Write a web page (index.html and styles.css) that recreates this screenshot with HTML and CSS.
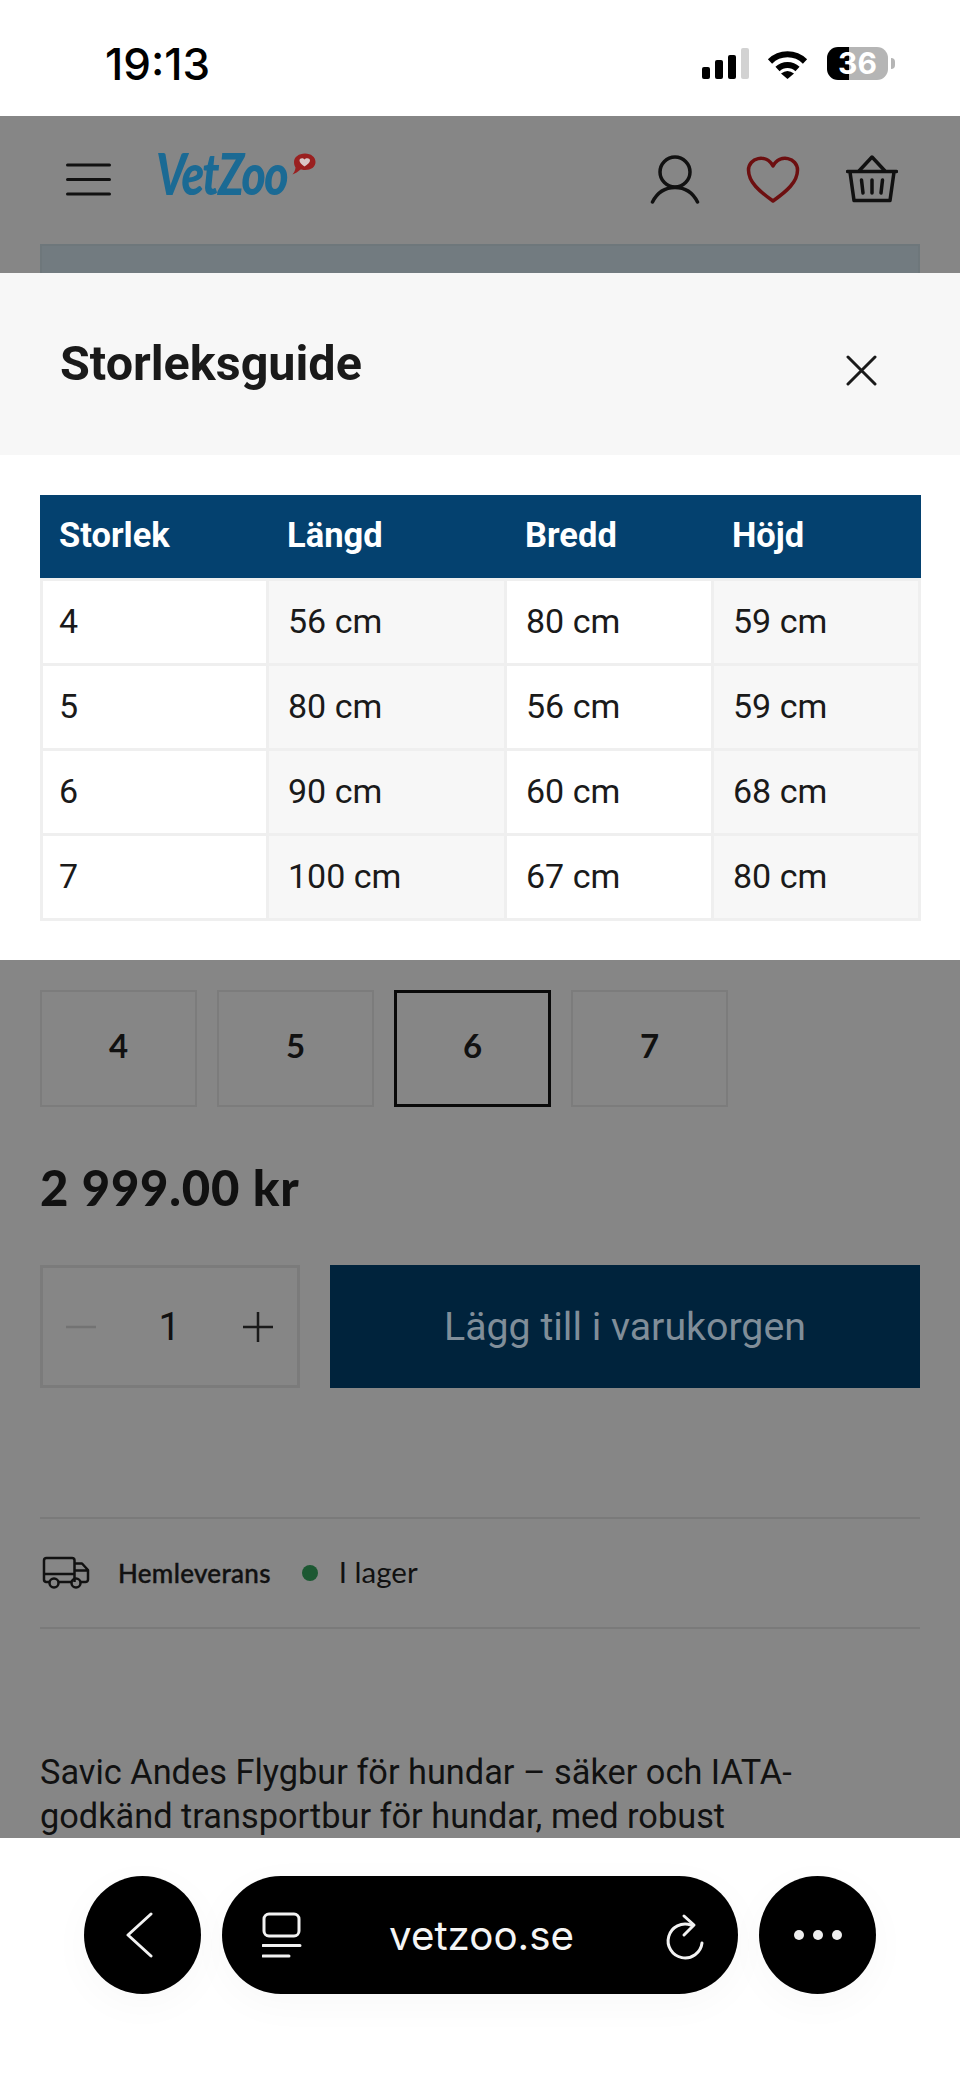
FILE: index.html

```html
<!DOCTYPE html>
<html>
<head>
  <meta charset="UTF-8">
  <title>Storleksguide - VetZoo</title>
  <link rel="stylesheet" href="styles.css">
</head>
<body>
<div class="phone">

  <div class="statusbar">
    <div class="time">19:13</div>
    <div class="status-icons">
      <div class="signal">
        <span class="bar bar1"></span>
        <span class="bar bar2"></span>
        <span class="bar bar3"></span>
        <span class="bar bar4"></span>
      </div>
      <svg class="wifi" width="41" height="31" viewBox="0 0 41 31">
        <path d="M3 13.500A25 25 0 0 1 38 13.500" fill="none" stroke="#000" stroke-width="6"/>
        <path d="M10.500 21A14.500 14.500 0 0 1 30.500 21" fill="none" stroke="#000" stroke-width="6"/>
        <path d="M14 25.500Q20.500 20.500 27 25.500L20.500 31Z" fill="#000"/>
      </svg>
      <div class="battery">36</div>
      <div class="battery-nub"></div>
    </div>
  </div>

  <div class="site-header">
    <svg class="menu-icon" width="45" height="34" viewBox="0 0 45 34">
      <path d="M1.500 3H43.500M1.500 17.500H43.500M1.500 32H43.500" stroke="#111" stroke-width="3" stroke-linecap="round"/>
    </svg>
    <div class="logo">
      <span class="logo-text">VetZoo</span>
      <svg class="logo-bubble" width="24" height="23" viewBox="0 0 24 23">
        <path d="M13 0.500C19 0.500 23.500 4 23.500 9C23.500 14 19 17 13 17C11 17 10 16.800 8.500 16.500C6 18.500 3.500 20.500 0.500 21.500C2 19.500 3.500 17 3.500 14.500C2.500 13 2 11 2 9C2 4 7 0.500 13 0.500Z" fill="#9a2020"/>
        <path d="M12.500 13.500C9.500 11.500 7.500 9.500 7.500 7.500C7.500 5 11 4.500 12.500 6.500C14 4.500 18 5 18 7.500C18 9.500 15.500 11.500 12.500 13.500Z" fill="#d9c8c8"/>
      </svg>
    </div>
    <div class="header-icons">
      <svg width="50" height="50" viewBox="0 0 50 50">
        <circle cx="25" cy="18" r="15" fill="none" stroke="#111" stroke-width="3.500"/>
        <path d="M2.500 48C7 39 15 33.500 25 33.500C35 33.500 43 39 47.500 48" fill="none" stroke="#111" stroke-width="3.500" stroke-linecap="round"/>
      </svg>
      <svg width="54" height="48" viewBox="0 0 54 48">
        <path d="M27 46C13 36 2.500 27 2.500 15C2.500 3 20 -2 27 11C34 -2 51.500 3 51.500 15C51.500 27 41 36 27 46Z" fill="none" stroke="#6d0f10" stroke-width="3.500" stroke-linejoin="round"/>
      </svg>
      <svg width="52" height="48" viewBox="0 0 52 48">
        <path d="M1.500 16.500H50.500M4 17L8 45.500H44L48 17" fill="none" stroke="#111" stroke-width="3.500" stroke-linecap="round" stroke-linejoin="round"/>
        <path d="M13 16L26 2L39 16" fill="none" stroke="#111" stroke-width="3.500" stroke-linejoin="round"/>
        <path d="M15.500 25L17 38M26 25V38M36.500 25L35 38" fill="none" stroke="#111" stroke-width="3.500" stroke-linecap="round"/>
      </svg>
    </div>
  </div>
  <div class="notice-box"></div>

  <div class="modal">
    <div class="modal-head">
      <h2>Storleksguide</h2>
      <svg class="close-icon" width="31" height="31" viewBox="0 0 31 31">
        <path d="M2 2L29 29M29 2L2 29" stroke="#1a1a1a" stroke-width="3" stroke-linecap="round"/>
      </svg>
    </div>
    <div class="modal-body">
      <table class="size-table">
        <thead>
          <tr><th class="col-size">Storlek</th><th class="col-len">Längd</th><th class="col-wid">Bredd</th><th>Höjd</th></tr>
        </thead>
        <tbody>
          <tr><td>4</td><td>56 cm</td><td>80 cm</td><td>59 cm</td></tr>
          <tr><td>5</td><td>80 cm</td><td>56 cm</td><td>59 cm</td></tr>
          <tr><td>6</td><td>90 cm</td><td>60 cm</td><td>68 cm</td></tr>
          <tr><td>7</td><td>100 cm</td><td>67 cm</td><td>80 cm</td></tr>
        </tbody>
      </table>
    </div>
  </div>

  <div class="product">
    <div class="sizes">
      <div class="size">4</div>
      <div class="size">5</div>
      <div class="size selected">6</div>
      <div class="size">7</div>
    </div>
    <div class="price">2 999.00 kr</div>
    <div class="buy-row">
      <div class="qty">
        <svg width="30" height="4" viewBox="0 0 30 4"><path d="M0 2H30" stroke="#737373" stroke-width="2.500"/></svg>
        <span class="qty-num">1</span>
        <svg width="30" height="30" viewBox="0 0 30 30"><path d="M0 15H30M15 0V30" stroke="#1a1a1a" stroke-width="2.500"/></svg>
      </div>
      <div class="add-btn">Lägg till i varukorgen</div>
    </div>
    <div class="delivery">
      <svg class="truck" width="48" height="34" viewBox="0 0 48 34">
        <path d="M7 26H4A2.500 2.500 0 0 1 2 23.500V4.500A2.500 2.500 0 0 1 4.500 2H30A2.500 2.500 0 0 1 32.500 4.500V26M17 26H29M2 18H32.500M33 7.500H40L46 14V23.500A2.500 2.500 0 0 1 43.500 26H39M33 14.500H46" fill="none" stroke="#111" stroke-width="2.500" stroke-linejoin="round"/>
        <circle cx="12" cy="27" r="4.500" fill="none" stroke="#111" stroke-width="2.500"/>
        <circle cx="34" cy="27" r="4.500" fill="none" stroke="#111" stroke-width="2.500"/>
      </svg>
      <span class="delivery-name">Hemleverans</span>
      <span class="stock-dot"></span>
      <span class="stock-text">I lager</span>
    </div>
    <p class="description">Savic Andes Flygbur för hundar – säker och IATA-godkänd transportbur för hundar, med robust</p>
  </div>

  <div class="browser-bar">
    <div class="round-btn back-btn">
      <svg width="28" height="46" viewBox="0 0 28 46">
        <path d="M25 2L2 23L25 44" fill="none" stroke="#f2f2f2" stroke-width="3" stroke-linecap="round" stroke-linejoin="round"/>
      </svg>
    </div>
    <div class="url-pill">
      <svg class="tabs-icon" width="40" height="46" viewBox="0 0 40 46">
        <rect x="2" y="2" width="35" height="22" rx="5" fill="none" stroke="#f2f2f2" stroke-width="3"/>
        <path d="M1 33.500H38M1 44H27" stroke="#f2f2f2" stroke-width="3" stroke-linecap="round"/>
      </svg>
      <span class="url">vetzoo.se</span>
      <svg class="reload-icon" width="50" height="54" viewBox="0 0 50 54">
        <path d="M30 17A17 17 0 1 0 41 35" fill="none" stroke="#f2f2f2" stroke-width="3" stroke-linecap="round"/>
        <path d="M23 8L33 17L23 27" fill="none" stroke="#f2f2f2" stroke-width="3" stroke-linecap="round" stroke-linejoin="round"/>
      </svg>
    </div>
    <div class="round-btn dots">
      <span></span><span></span><span></span>
    </div>
  </div>

</div>
</body>
</html>
```

FILE: styles.css

```css
* {
  box-sizing: border-box;
}
body {
  margin: 0;
  background: #868686;
  font-family: Roboto, "Liberation Sans", sans-serif;
  color: #111;
}
.phone {
  width: 960px;
  height: 2078px;
  display: flex;
  flex-direction: column;
  overflow: hidden;
}

/* status bar */
.statusbar {
  height: 116px;
  flex: none;
  background: #fff;
  display: flex;
  align-items: center;
  justify-content: space-between;
  padding: 11px 65px 0 105px;
}
.time {
  font-family: Inter, sans-serif;
  font-size: 44px;
  font-weight: 500;
  color: #000;
}
.status-icons {
  display: flex;
  align-items: center;
}
.signal {
  display: flex;
  align-items: flex-end;
  gap: 5px;
  height: 31px;
  margin-right: 18px;
}
.bar {
  width: 8px;
  background: #000;
  border-radius: 2px;
}
.bar1 { height: 12px; }
.bar2 { height: 19px; }
.bar3 { height: 24px; }
.bar4 { height: 31px; background: #d2d2d2; }
.wifi {
  margin-right: 19px;
}
.battery {
  width: 61px;
  height: 33px;
  border-radius: 11px;
  background: linear-gradient(90deg, #000 36%, #b5b5b5 36%);
  color: #fff;
  font-family: Inter, sans-serif;
  font-size: 30px;
  font-weight: 700;
  line-height: 33px;
  text-align: center;
}
.battery-nub {
  width: 4px;
  height: 11px;
  margin-left: 3px;
  background: #b5b5b5;
  border-radius: 0 4px 4px 0;
}

/* site header behind the overlay */
.site-header {
  height: 128px;
  flex: none;
  display: flex;
  align-items: center;
  padding: 0 62px 2px 66px;
}
.menu-icon {
  margin-right: 45px;
}
.logo {
  display: flex;
  align-items: flex-start;
  width: 160px;
  height: 54px;
}
.logo-text {
  font-family: Lato, sans-serif;
  font-style: italic;
  font-weight: 900;
  font-size: 58px;
  line-height: 54px;
  color: #1b6a94;
  letter-spacing: -2px;
  width: 136px;
  margin-top: -6px;
  display: inline-block;
  transform: scaleX(.8);
  transform-origin: left center;
}
.logo-bubble {
  margin-top: 1px;
}
.header-icons {
  margin-left: auto;
  display: flex;
  align-items: center;
  gap: 46px;
}
.notice-box {
  height: 29px;
  flex: none;
  margin: 0 40px;
  background: #727b80;
  border: 2px solid #6e777b;
  border-bottom: none;
}

/* modal */
.modal {
  flex: none;
  background: #fff;
}
.modal-head {
  height: 182px;
  background: #f7f7f7;
  display: flex;
  align-items: center;
  justify-content: space-between;
  padding: 0 83px 0 60px;
}
.modal-head h2 {
  margin: 0 0 2px;
  font-size: 48.500px;
  font-weight: 700;
  color: #1a1a1a;
}
.close-icon {
  margin-top: 13px;
}
.modal-body {
  height: 505px;
  padding: 40px 39px 0 40px;
}
.size-table {
  width: 881px;
  table-layout: fixed;
  border-collapse: separate;
  border-spacing: 0;
  font-size: 34px;
  color: #1a1a1a;
}
.size-table th {
  height: 83px;
  padding: 0 0 3px 18px;
  background: #04416f;
  color: #fff;
  font-size: 34.500px;
  font-weight: 700;
  text-align: left;
}
.size-table th:first-child {
  padding-left: 19px;
}
.col-size { width: 229px; }
.col-len { width: 238px; }
.col-wid { width: 207px; }
.size-table td {
  height: 85px;
  padding: 0 0 3px 19px;
  border-right: 3px solid #efefef;
  border-bottom: 3px solid #efefef;
}
.size-table td:first-child {
  padding-left: 16px;
  border-left: 3px solid #efefef;
}
.size-table tbody tr:first-child td {
  height: 88px;
  border-top: 3px solid #efefef;
}
.size-table td:nth-child(even) {
  background: #f7f7f7;
}

/* product */
.product {
  flex: 1;
  min-height: 0;
  overflow: hidden;
  padding: 30px 40px 0;
}
.sizes {
  display: flex;
  gap: 20px;
}
.size {
  width: 157px;
  height: 117px;
  border: 2px solid #7c7c7c;
  display: flex;
  align-items: center;
  justify-content: center;
  padding-bottom: 7px;
  font-family: Lato, sans-serif;
  font-size: 33px;
  font-weight: 700;
  color: #111;
}
.size.selected {
  border: 3px solid #0a0a0a;
}
.price {
  font-family: Lato, sans-serif;
  font-size: 49px;
  font-weight: 900;
  line-height: 56px;
  letter-spacing: 0.8px;
  margin-top: 52px;
  color: #111;
}
.buy-row {
  display: flex;
  gap: 30px;
  margin-top: 50px;
}
.qty {
  width: 260px;
  height: 123px;
  border: 3px solid #7b7b7b;
  display: flex;
  align-items: center;
  justify-content: space-between;
  padding: 0 24px 0 23px;
}
.qty-num {
  font-size: 39px;
  font-weight: 400;
  color: #111;
}
.add-btn {
  flex: 1;
  height: 123px;
  background: #00233c;
  color: #808e99;
  font-size: 39.300px;
  display: flex;
  align-items: center;
  justify-content: center;
}
.delivery {
  margin-top: 129px;
  height: 112px;
  border-top: 2px solid #7a7a7a;
  border-bottom: 2px solid #7a7a7a;
  display: flex;
  align-items: center;
}
.truck {
  margin-left: 2px;
  margin-right: 28px;
}
.delivery-name {
  font-family: Lato, sans-serif;
  font-size: 26px;
  font-weight: 500;
  letter-spacing: 0.3px;
  -webkit-text-stroke: 0.4px #111;
  color: #111;
}
.stock-dot {
  width: 16px;
  height: 16px;
  border-radius: 50%;
  background: #1c5832;
  margin: 0 21px 0 31px;
}
.stock-text {
  font-family: Lato, sans-serif;
  font-size: 29.500px;
  line-height: 30px;
  padding-bottom: 2px;
  color: #111;
}
.description {
  margin: 122px 0 0;
  max-width: 860px;
  font-size: 34.350px;
  line-height: 43.500px;
  color: #111;
}

/* browser bar */
.browser-bar {
  height: 240px;
  flex: none;
  background: #fff;
  display: flex;
  align-items: flex-start;
  gap: 21px;
  padding: 38px 0 0 84px;
}
.round-btn {
  width: 117px;
  height: 118px;
  border-radius: 50%;
  background: #000;
  display: flex;
  align-items: center;
  justify-content: center;
  box-shadow: 0 10px 40px rgba(0, 0, 0, .03);
}
.back-btn {
  padding-right: 5px;
}
.dots {
  gap: 9px;
}
.dots span {
  width: 10px;
  height: 10px;
  border-radius: 50%;
  background: #eee;
}
.url-pill {
  width: 516px;
  height: 118px;
  border-radius: 60px;
  background: #000;
  display: flex;
  align-items: center;
  justify-content: space-between;
  padding: 0 27px 0 40px;
  box-shadow: 0 10px 40px rgba(0, 0, 0, .03);
}
.url {
  font-family: Inter, sans-serif;
  font-size: 40.300px;
  font-weight: 400;
  color: #f5f5f5;
}
```
